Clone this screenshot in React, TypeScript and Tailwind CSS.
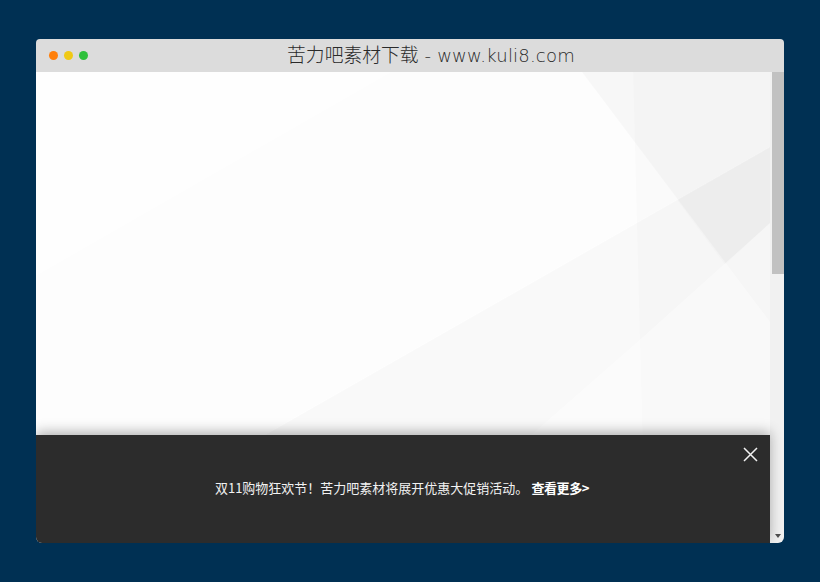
function Backdrop() {
    // coordinates are page coords minus the content origin (36, 72)
    return (
        <svg className="w-full h-full block" viewBox="0 0 734 471" preserveAspectRatio="none">
            <rect width="734" height="471" fill="#fefefe" />
            <polygon points="0,203 354,0 734,0 734,75 229,363 0,363" fill="#000" opacity="0.004" />
            <polygon points="734,75 734,471 40,471 229,363" fill="#000" opacity="0.018" />
            <polygon points="597,0 734,0 734,471 609,471" fill="#000" opacity="0.01" />
            <polygon points="546,0 734,0 734,250" fill="#000" opacity="0.022" />
            <polygon points="641,128 734,75 734,151 689,193" fill="#000" opacity="0.012" />
            <polygon points="734,151 734,471 372,471 607,265" fill="#fff" opacity="0.4" />
        </svg>
    );
}

export default function App() {
    return (
        <div className="min-h-[582px] bg-[#003053] pt-[39px] flex justify-center font-['Noto_Sans_CJK_SC',sans-serif]">
            <div className="w-[748px] h-[504px] flex flex-col rounded-t-[4px] rounded-b-[6px] overflow-hidden">
                <div className="relative h-[33px] shrink-0 bg-[#dcdcdc] flex items-center justify-center pl-[42px] pb-[2px]">
                    <div className="absolute left-[12.5px] top-[12px] flex gap-[6px]">
                        <span className="w-[9px] h-[9px] rounded-full bg-[#ff7f0a]" />
                        <span className="w-[9px] h-[9px] rounded-full bg-[#f0c915]" />
                        <span className="w-[9px] h-[9px] rounded-full bg-[#2fc03c]" />
                    </div>
                    <h1 className="text-[18.8px] leading-[31px] font-light text-[#2a2a2a] whitespace-nowrap">
                        苦力吧素材下载
                        <span className="font-['DejaVu_Sans',sans-serif] font-extralight text-[18px] tracking-[0.2px] ml-[6px]">- www.kuli8.com</span>
                    </h1>
                </div>

                <div className="flex-1 flex min-h-0">
                    <div className="relative flex-1 min-w-0">
                        <Backdrop />
                        <div className="absolute left-0 right-0 bottom-0 h-[108px] bg-[#2c2c2c] shadow-[0_-3px_12px_rgba(0,0,0,0.3)]">
                            <button className="absolute right-[12px] top-[12px] w-[15px] h-[15px]">
                                <svg viewBox="0 0 15 15" className="w-full h-full block">
                                    <path d="M1 1 L14 14 M14 1 L1 14" stroke="#f2f2f2" strokeWidth="1.5" fill="none" />
                                </svg>
                            </button>
                            <p className="h-full flex items-center justify-center pb-[2px] pr-[2px] text-[13px] text-[#f2f2f2]">
                                <span>双11购物狂欢节！苦力吧素材将展开优惠大促销活动。</span>
                                <a className="ml-[3px] font-bold text-white tracking-[-0.4px]">查看更多&gt;</a>
                            </p>
                        </div>
                    </div>

                    <div className="w-[14px] shrink-0 bg-[#f1f1f1] flex flex-col pl-[2px]">
                        <div className="h-[202px] bg-[#c1c1c1]" />
                        <div className="mt-auto h-[14px] flex items-center justify-center">
                            <span className="w-0 h-0 border-l-[3px] border-r-[3px] border-t-[4px] border-l-transparent border-r-transparent border-t-[#505050]" />
                        </div>
                    </div>
                </div>
            </div>
        </div>
    );
}
